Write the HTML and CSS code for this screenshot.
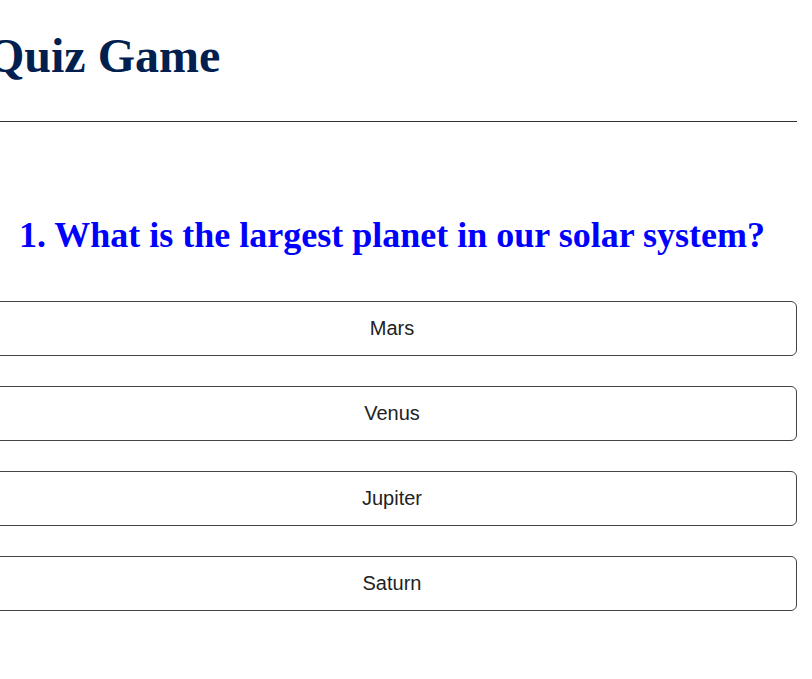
FILE: index.html
```html
<!DOCTYPE html>
<html lang="en">
<head>
<meta charset="utf-8">
<title>Quiz Game</title>
<link rel="stylesheet" href="styles.css">
</head>
<body>
<div class="app">
  <header class="header">
    <h1 class="title">Quiz Game</h1>
  </header>
  <main class="quiz">
    <h2 class="question">1. What is the largest planet in our solar system?</h2>
    <div class="options">
      <button class="option">Mars</button>
      <button class="option">Venus</button>
      <button class="option">Jupiter</button>
      <button class="option">Saturn</button>
    </div>
  </main>
</div>
</body>
</html>
```
FILE: styles.css
```css
html, body {
  margin: 0;
  padding: 0;
  background: #ffffff;
}

.app {
  width: 810px;
  margin-left: -13px;
  font-family: "Liberation Serif", "Times New Roman", serif;
}

.header {
  padding-top: 29px;
  padding-bottom: 39px;
  border-bottom: 1px solid #333333;
}

.title {
  margin: 0;
  font-size: 48px;
  line-height: 53px;
  font-weight: bold;
  color: #012050;
}

.quiz {
  padding-top: 93px;
}

.question {
  margin: 0;
  text-align: center;
  font-size: 36px;
  line-height: 40px;
  font-weight: bold;
  color: #0000ff;
}

.options {
  display: flex;
  flex-direction: column;
  gap: 30px;
  margin-top: 46px;
}

.option {
  display: block;
  width: 100%;
  height: 55px;
  margin: 0;
  padding: 0;
  background: #ffffff;
  border: 1px solid #444444;
  border-radius: 6px;
  font-family: "Liberation Sans", Arial, sans-serif;
  font-size: 20px;
  color: #222222;
  text-align: center;
  cursor: pointer;
}
```
